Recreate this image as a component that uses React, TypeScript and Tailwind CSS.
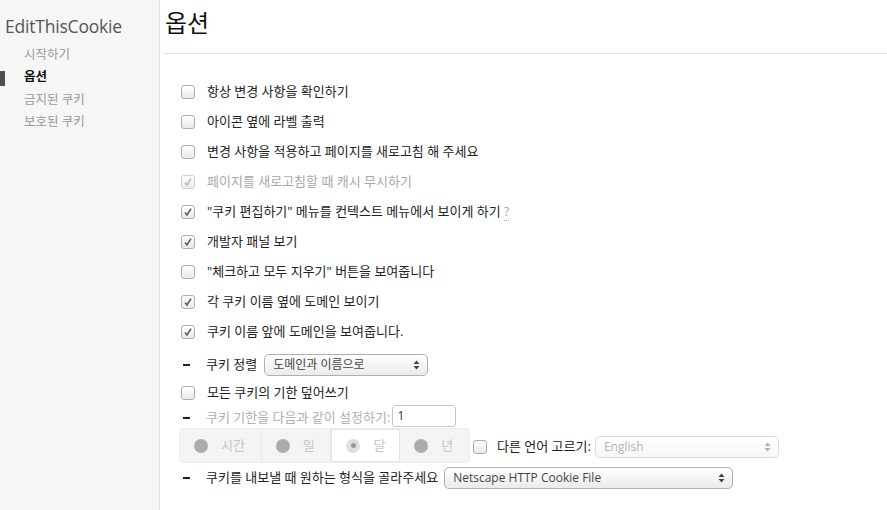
import React from 'react';

const FONT = '"Open Sans", "Noto Sans CJK KR", sans-serif';

type Opt = { label: string; checked: boolean; muted?: boolean; help?: boolean };

const options: Opt[] = [
  { label: '항상 변경 사항을 확인하기', checked: false },
  { label: '아이콘 옆에 라벨 출력', checked: false },
  { label: '변경 사항을 적용하고 페이지를 새로고침 해 주세요', checked: false },
  { label: '페이지를 새로고침할 때 캐시 무시하기', checked: true, muted: true },
  { label: '"쿠키 편집하기" 메뉴를 컨텍스트 메뉴에서 보이게 하기', checked: true, help: true },
  { label: '개발자 패널 보기', checked: true },
  { label: '"체크하고 모두 지우기" 버튼을 보여줍니다', checked: false },
  { label: '각 쿠키 이름 옆에 도메인 보이기', checked: true },
  { label: '쿠키 이름 앞에 도메인을 보여줍니다.', checked: true },
];

const nav = ['시작하기', '옵션', '금지된 쿠키', '보호된 쿠키'];

function Box({ checked, muted }: { checked: boolean; muted?: boolean }) {
  return (
    <span
      className={`w-[14px] h-[14px] shrink-0 rounded-[3px] border bg-gradient-to-b from-white to-[#e9e9e9] flex items-center justify-center ${
        muted ? 'border-[#d2d2d2]' : 'border-[#adadad]'
      }`}
    >
      {checked && (
        <svg width="10" height="10" viewBox="0 0 10 10">
          <path
            d="M2 5.6 L4 8 L8 1.6"
            fill="none"
            stroke={muted ? '#b8b8b8' : '#555'}
            strokeWidth="1.5"
          />
        </svg>
      )}
    </span>
  );
}

function Arrows({ muted }: { muted?: boolean }) {
  const c = muted ? '#b0b0b0' : '#444';
  return (
    <svg width="7" height="10" viewBox="0 0 7 10" className="shrink-0">
      <path d="M3.5 0.5 L6.5 4 L0.5 4 Z" fill={c} />
      <path d="M3.5 9.5 L6.5 6 L0.5 6 Z" fill={c} />
    </svg>
  );
}

function Select({ value, width, muted }: { value: string; width: string; muted?: boolean }) {
  return (
    <div
      className={`${width} h-[22px] rounded-[5px] border flex items-center justify-between pl-[8px] pr-[7px] text-[12px] bg-gradient-to-b ${
        muted
          ? 'border-[#dcdcdc] from-white to-[#f7f7f7] text-[#b3b3b3]'
          : 'border-[#b0b0b0] from-white to-[#ebebeb] text-[#444]'
      }`}
    >
      <span>{value}</span>
      <Arrows muted={muted} />
    </div>
  );
}

function Dash() {
  return <span className="w-[7px] h-[2px] bg-[#222] shrink-0 ml-[2px] mr-[16px]" />;
}

function Radio({ label, selected, width }: { label: string; selected?: boolean; width: string }) {
  return (
    <div
      className={`${width} h-full flex items-center gap-[13px] pl-[14px] ${
        selected ? 'bg-white border border-[#e4e4e4] -my-px h-[37px]' : 'border-r border-[#e8e8e8] last:border-r-0'
      }`}
    >
      {selected ? (
        <span className="w-[14px] h-[14px] rounded-full bg-[#dedede] flex items-center justify-center">
          <span className="w-[5px] h-[5px] rounded-full bg-[#9a9a9a]" />
        </span>
      ) : (
        <span className="w-[14px] h-[14px] rounded-full bg-[#acacac]" />
      )}
      <span className="text-[13px] text-[#c4c4c4]">{label}</span>
    </div>
  );
}

export default function App() {
  return (
    <div className="w-[887px] h-[510px] flex bg-white overflow-hidden" style={{ fontFamily: FONT }}>
      {/* sidebar */}
      <aside className="w-[160px] shrink-0 bg-[#f6f6f6] border-r border-[#e2e2e2] pt-[13px]">
        <div className="pl-[5px] text-[17.5px] text-[#555] leading-[26px] tracking-[-0.2px]">EditThisCookie</div>
        <ul className="mt-[5px]">
          {nav.map((item) => (
            <li key={item} className="relative h-[22.5px] flex items-center pl-[24px] text-[12.5px]">
              {item === '옵션' && <span className="absolute left-0 top-[4px] w-[5px] h-[15px] bg-[#4b4f57]" />}
              <span className={item === '옵션' ? 'text-[#111] font-semibold' : 'text-[#999]'}>{item}</span>
            </li>
          ))}
        </ul>
      </aside>

      {/* main */}
      <main className="flex-1 pl-[4px]">
        <h1 className="h-[54px] border-b border-[#e0e0e0] pl-[1px] pt-[6px] text-[24px] text-[#111] leading-[34px]">옵션</h1>

        <div className="pl-[17px] pt-[23px] text-[13px] text-[#222]">
          {options.map((o) => (
            <div key={o.label} className="h-[30px] flex items-center gap-[12px]">
              <Box checked={o.checked} muted={o.muted} />
              <span className={o.muted ? 'text-[#a8a8a8]' : ''}>
                {o.label}
                {o.help && (
                  <span className="ml-[3px] text-[#9aa8b8] border-b border-dotted border-[#9aa8b8]">?</span>
                )}
              </span>
            </div>
          ))}

          <div className="mt-[5px] h-[26px] flex items-center">
            <Dash />
            <span className="mr-[7px]">쿠키 정렬</span>
            <Select value="도메인과 이름으로" width="w-[164px]" />
          </div>

          <div className="h-[30px] flex items-center gap-[12px]">
            <Box checked={false} />
            <span>모든 쿠키의 기한 덮어쓰기</span>
          </div>

          <div className="h-[20px] flex items-center">
            <Dash />
            <span className="text-[#b0b0b0]">쿠키 기한을 다음과 같이 설정하기:</span>
            <div className="ml-[2px] mt-[-4px] w-[64px] h-[22px] border border-[#c8c8c8] rounded-[3px] pl-[4px] text-[12px] leading-[20px] text-[#333]">
              1
            </div>
          </div>

          <div className="flex items-center">
            <div className="w-[291px] h-[35px] -ml-[2px] rounded-[4px] bg-[#f4f4f4] border border-[#ececec] flex items-center">
              <Radio label="시간" width="w-[82px]" />
              <Radio label="일" width="w-[70px]" />
              <Radio label="달" width="w-[69px]" selected />
              <Radio label="년" width="w-[69px]" />
            </div>
            <div className="ml-[3px] mt-[3px] flex items-center">
              <Box checked={false} />
              <span className="ml-[10px] mr-[4px]">다른 언어 고르기:</span>
              <Select value="English" width="w-[184px]" muted />
            </div>
          </div>

          <div className="mt-[3px] h-[24px] flex items-center">
            <Dash />
            <span className="mr-[6px]">쿠키를 내보낼 때 원하는 형식을 골라주세요</span>
            <Select value="Netscape HTTP Cookie File" width="w-[289px]" />
          </div>
        </div>
      </main>
    </div>
  );
}
